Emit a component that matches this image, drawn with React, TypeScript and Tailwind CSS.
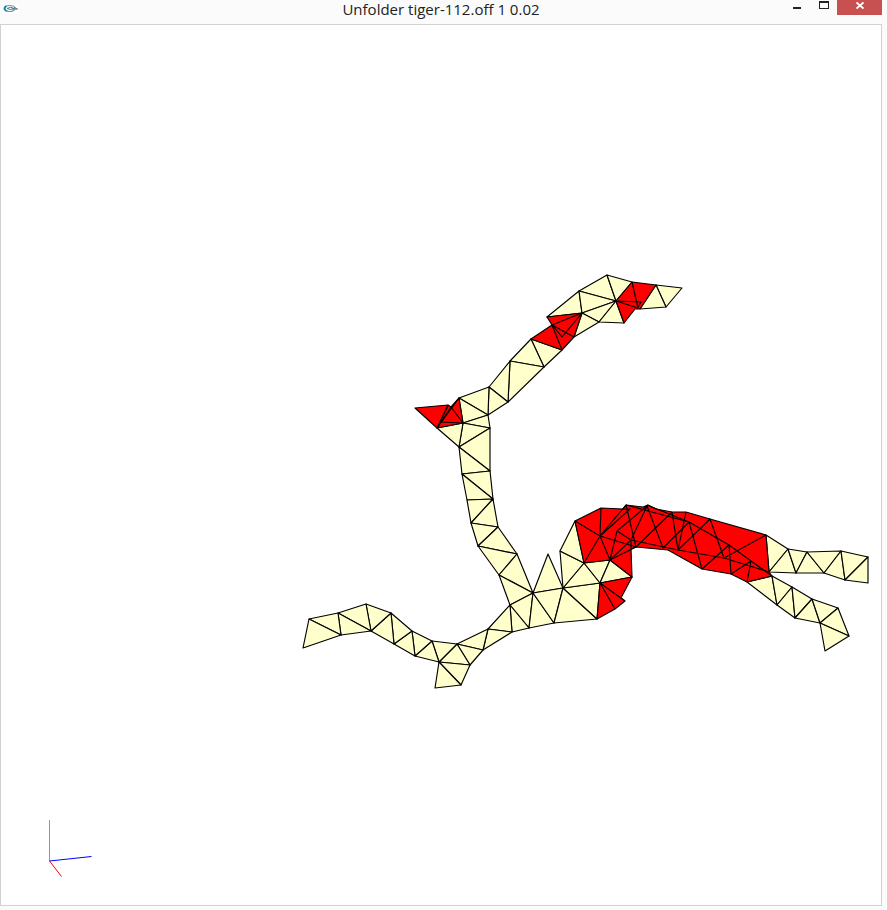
type Point = [number, number];

const CREAM = "#ffffcc";
const RED = "#ff0000";

// Strips of adjoining triangles, one entry per face.
const creamFaces: Point[][] = [
  // head strip
  [[547, 317], [579, 291], [582, 313]],
  [[579, 291], [607, 275], [616, 301]],
  [[579, 291], [616, 301], [582, 313]],
  [[607, 275], [632, 282], [616, 301]],
  [[582, 313], [616, 301], [599, 322]],
  [[616, 301], [624, 323], [599, 322]],
  [[582, 313], [599, 322], [574, 337]],
  [[656, 285], [682, 288], [666, 307]],
  [[656, 285], [666, 307], [640, 309]],
  // upper arm
  [[531, 339], [562, 350], [544, 367]],
  [[531, 339], [544, 367], [510, 361]],
  [[510, 361], [544, 367], [508, 402]],
  [[510, 361], [508, 402], [489, 387]],
  [[489, 387], [508, 402], [488, 415]],
  [[489, 387], [488, 415], [459, 398]],
  [[459, 398], [488, 415], [463, 423]],
  [[463, 423], [488, 415], [490, 428]],
  [[463, 423], [490, 428], [459, 447]],
  [[437, 428], [463, 423], [459, 447]],
  // neck
  [[459, 447], [490, 428], [490, 471]],
  [[459, 447], [490, 471], [462, 474]],
  [[462, 474], [490, 471], [493, 499]],
  [[462, 474], [493, 499], [467, 500]],
  [[467, 500], [493, 499], [471, 523]],
  [[471, 523], [493, 499], [498, 527]],
  [[471, 523], [498, 527], [478, 546]],
  [[478, 546], [498, 527], [517, 554]],
  [[478, 546], [517, 554], [499, 575]],
  [[499, 575], [517, 554], [533, 593]],
  [[499, 575], [533, 593], [510, 605]],
  [[533, 593], [548, 554], [563, 588]],
  // left leg
  [[533, 593], [510, 605], [529, 628]],
  [[510, 605], [529, 628], [512, 632]],
  [[510, 605], [512, 632], [488, 629]],
  [[488, 629], [512, 632], [483, 650]],
  [[488, 629], [483, 650], [457, 644]],
  [[457, 644], [483, 650], [470, 665]],
  [[457, 644], [470, 665], [439, 662]],
  [[439, 662], [470, 665], [461, 685]],
  [[439, 662], [461, 685], [435, 688]],
  [[457, 644], [439, 662], [432, 641]],
  [[432, 641], [439, 662], [415, 656]],
  [[432, 641], [415, 656], [412, 631]],
  [[412, 631], [415, 656], [394, 644]],
  [[412, 631], [394, 644], [391, 613]],
  [[391, 613], [394, 644], [371, 631]],
  [[391, 613], [371, 631], [366, 604]],
  [[366, 604], [371, 631], [338, 613]],
  [[338, 613], [371, 631], [341, 635]],
  [[338, 613], [341, 635], [309, 619]],
  [[309, 619], [341, 635], [303, 648]],
  // belly
  [[533, 593], [529, 628], [554, 623]],
  [[533, 593], [554, 623], [563, 588]],
  [[563, 588], [554, 623], [597, 619]],
  [[563, 588], [597, 619], [600, 583]],
  [[563, 588], [600, 583], [584, 563]],
  [[563, 588], [584, 563], [560, 551]],
  [[560, 551], [584, 563], [575, 521]],
  [[584, 563], [600, 583], [610, 560]],
  [[600, 583], [632, 577], [610, 560]],
  // upper right leg
  [[766, 535], [769, 572], [788, 549]],
  [[788, 549], [769, 572], [796, 573]],
  [[788, 549], [796, 573], [807, 552]],
  [[807, 552], [796, 573], [824, 573]],
  [[807, 552], [824, 573], [841, 551]],
  [[841, 551], [824, 573], [845, 580]],
  [[841, 551], [845, 580], [868, 557]],
  [[868, 557], [845, 580], [868, 583]],
  // lower right leg
  [[747, 582], [772, 576], [777, 605]],
  [[772, 576], [777, 605], [792, 587]],
  [[792, 587], [777, 605], [795, 618]],
  [[792, 587], [795, 618], [812, 599]],
  [[812, 599], [795, 618], [820, 623]],
  [[812, 599], [820, 623], [838, 608]],
  [[838, 608], [820, 623], [849, 636]],
  [[820, 623], [849, 636], [825, 651]],
];

// Regions whose faces overlap each other.
const redRegions: Point[][] = [
  [[547, 317], [582, 313], [574, 337], [562, 350], [531, 339], [552, 325]],
  [[616, 301], [632, 282], [656, 285], [640, 309], [635, 309], [624, 323]],
  [[415, 408], [448, 405], [451, 407], [459, 398], [463, 423], [437, 428]],
  [[600, 583], [632, 577], [621, 598], [625, 601], [615, 609], [597, 619]],
  [
    [584, 563], [575, 521], [601, 508], [623, 509], [626, 505], [643, 507],
    [648, 505], [656, 509], [672, 512], [686, 512], [710, 519], [766, 535],
    [769, 572], [772, 576], [747, 582], [731, 574], [702, 569], [668, 550],
    [636, 547], [631, 549], [632, 577], [610, 560],
  ],
];

const redEdges: Point[][] = [
  [[582, 313], [552, 325], [574, 337]],
  [[552, 325], [562, 350]],
  [[552, 325], [562, 337], [582, 313]],
  [[632, 282], [638, 308], [616, 301], [641, 302], [637, 309]],
  [[448, 405], [437, 428], [459, 398]],
  [[437, 428], [451, 407], [463, 423], [440, 422]],
  [[440, 422], [448, 406]],
  [[615, 609], [600, 583], [625, 601]],
  [[575, 521], [600, 536], [601, 508]],
  [[584, 563], [600, 536], [610, 560]],
  [[600, 536], [626, 505], [636, 547], [600, 536]],
  [[623, 509], [630, 509], [600, 536]],
  [[610, 560], [617, 531], [631, 540], [610, 560]],
  [[610, 560], [636, 547]],
  [[617, 531], [647, 506], [631, 540], [631, 549]],
  [[626, 505], [689, 522]],
  [[647, 506], [663, 548], [689, 522]],
  [[672, 512], [678, 550], [686, 512]],
  [[647, 505], [689, 522], [702, 569], [729, 545]],
  [[631, 540], [678, 550], [724, 558], [769, 572]],
  [[636, 547], [672, 512]],
  [[678, 550], [710, 519], [724, 558], [766, 535]],
  [[689, 522], [729, 545], [731, 574], [751, 561]],
  [[729, 545], [751, 561], [747, 582]],
  [[751, 561], [772, 576]],
];

const toPoints = (points: Point[]) => points.map((p) => p.join(",")).join(" ");

function Viewport() {
  return (
    <svg
      viewBox="1 25 880 880"
      className="block w-full"
      role="img"
      aria-label="Unfolded mesh"
    >
      <g stroke="#000000" strokeWidth="1.15" strokeLinejoin="round">
        {creamFaces.map((face, i) => (
          <polygon key={i} points={toPoints(face)} fill={CREAM} />
        ))}
        {redRegions.map((region, i) => (
          <polygon key={i} points={toPoints(region)} fill={RED} />
        ))}
        {redEdges.map((edge, i) => (
          <polyline key={i} points={toPoints(edge)} fill="none" />
        ))}
      </g>
      <line x1="49.5" y1="820" x2="49.5" y2="861" stroke="#00ff00" />
      <line x1="49.5" y1="861" x2="61.5" y2="876.5" stroke="#ff0000" />
      <line x1="49.5" y1="861" x2="91.5" y2="856.5" stroke="#0000ff" />
    </svg>
  );
}

function AppIcon() {
  return (
    <svg viewBox="0 0 16 10" className="h-[10px] w-4" fill="none" aria-hidden="true">
      <rect width="16" height="10" fill="#ffffff" />
      <ellipse cx="6.5" cy="4.5" rx="5.5" ry="3" stroke="#6b9aa5" strokeWidth="1.2" />
      <path d="M3.5 2Q0 4.500 3.500 7" stroke="#12808c" strokeWidth="1.600" />
      <path d="M4 4.500Q8 2 11 4.500Q8 6.500 4 4.500M9 5H15M11 3L14 5" stroke="#4c7885" />
    </svg>
  );
}

export default function App() {
  return (
    <div className="min-h-screen bg-[#fbfbfb] pr-[5px]">
      <header className="grid h-6 grid-cols-[1fr_auto_1fr] items-start">
        <div className="pt-1 pl-[3px]">
          <AppIcon />
        </div>
        <h1 className="font-['Open_Sans','Noto_Sans',sans-serif] text-[15px] leading-[18px] whitespace-nowrap text-[#222222]">
          Unfolder tiger-112.off 1 0.02
        </h1>
        <div className="flex h-[15px] justify-end">
          <button type="button" aria-label="Minimize" className="flex w-7 items-center justify-center">
            <svg viewBox="0 0 8 15" className="h-[15px] w-2" aria-hidden="true">
              <path d="M0 7h8v2H0z" fill="#222222" />
            </svg>
          </button>
          <button type="button" aria-label="Maximize" className="flex w-[26px] items-center justify-center">
            <svg viewBox="0 0 10 15" className="h-[15px] w-[10px]" aria-hidden="true">
              <path fillRule="evenodd" d="M0 1h10v8H0zM1 3v5h8V3z" fill="#222222" />
            </svg>
          </button>
          <button type="button" aria-label="Close" className="flex w-[45px] items-center justify-center bg-[#c75050]">
            <svg viewBox="0 0 8 15" className="h-[15px] w-2" aria-hidden="true">
              <path d="M0.500 2.500L7.500 8.500M7.500 2.500L0.500 8.500" stroke="#ffffff" strokeWidth="1.800" />
            </svg>
          </button>
        </div>
      </header>
      <main className="border border-[#d2d2d2] bg-white">
        <Viewport />
      </main>
    </div>
  );
}
